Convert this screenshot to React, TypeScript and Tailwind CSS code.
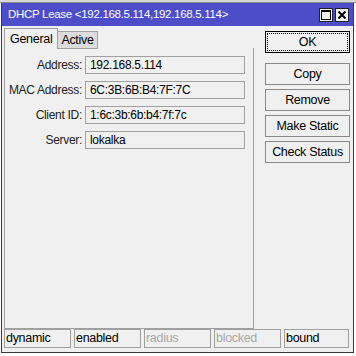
import React from "react";

const fields = [
    {label: "Address:", value: "192.168.5.114"},
    {label: "MAC Address:", value: "6C:3B:6B:B4:7F:7C"},
    {label: "Client ID:", value: "1:6c:3b:6b:b4:7f:7c"},
    {label: "Server:", value: "lokalka"},
];

const buttons = ["Copy", "Remove", "Make Static", "Check Status"];

const status = [
    {text: "dynamic", off: false},
    {text: "enabled", off: false},
    {text: "radius", off: true},
    {text: "blocked", off: true},
    {text: "bound", off: false},
];

export default function App() {
    return (
        <div className="w-[356px] h-[356px] bg-white overflow-hidden text-[12px] tracking-[-0.3px] text-black"
             style={{fontFamily: '"Liberation Sans", Arial, sans-serif'}}>
            {/* window behind */}
            <div className="h-[3px] bg-[#d8d8d8] border-b border-[#888]"/>

            <div className="ml-[1px] w-[353px] h-[350px] border border-[#3a3a3a] border-t-0 bg-[#f0f0f0] flex flex-col">
                {/* title bar */}
                <div className="h-[23px] bg-[#4d4dc9] flex items-center pl-[6px] pr-[4px]">
                    <span className="text-white text-[11.5px] flex-1 whitespace-nowrap">
                        DHCP Lease &lt;192.168.5.114,192.168.5.114&gt;
                    </span>
                    <div className="flex gap-[2px]">
                        <div className="w-[14px] h-[14px] bg-[#f0f0f0] border border-[#222] flex items-center justify-center">
                            <div className="w-[10px] h-[10px] border border-black border-t-2"/>
                        </div>
                        <div className="w-[14px] h-[14px] bg-[#f0f0f0] border border-[#222] flex items-center justify-center">
                            <svg width="8" height="8" viewBox="0 0 8 8">
                                <path d="M0.5 0.5 L7.5 7.5 M7.5 0.5 L0.5 7.5" stroke="black" strokeWidth="2"/>
                            </svg>
                        </div>
                    </div>
                </div>

                <div className="flex flex-1">
                    {/* left: tabs + panel */}
                    <div className="flex flex-col pl-[2px] pt-[2px]">
                        <div className="flex items-end h-[21px] relative z-10">
                            <div className="h-[21px] px-[5px] bg-[#f0f0f0] border border-[#a0a0a0] border-b-0 flex items-center text-[12.5px]">
                                General
                            </div>
                            <div className="h-[18px] px-[3px] bg-[#dcdcdc] border border-[#a0a0a0] border-l-0 flex items-center text-[12.5px]">
                                Active
                            </div>
                        </div>
                        <div className="w-[250px] h-[281px] -mt-[1px] border border-[#a0a0a0] border-t-0 flex flex-col gap-[7px] pt-[8px]">
                            {fields.map((f) => (
                                <div key={f.label} className="flex items-center h-[18px]">
                                    <div className="w-[80px] text-right pr-[3px] text-[#222]">{f.label}</div>
                                    <div className="w-[160px] h-[18px] border border-[#a0a0a0] flex items-center pl-[4px]">
                                        {f.value}
                                    </div>
                                </div>
                            ))}
                        </div>
                    </div>

                    {/* right: buttons */}
                    <div className="flex flex-col pl-[11px] pt-[5px] w-[96px]">
                        <div className="w-[85px] h-[22px] border border-black bg-[#f0f0f0] p-[1px]">
                            <div className="w-full h-full border border-dotted border-black flex items-center justify-center text-[12.5px]">
                                OK
                            </div>
                        </div>
                        <div className="flex flex-col gap-[4px] mt-[10px]">
                            {buttons.map((b) => (
                                <div key={b}
                                     className="w-[85px] h-[22px] border border-[#888] bg-[#f0f0f0] flex items-center justify-center text-[12.5px]">
                                    {b}
                                </div>
                            ))}
                        </div>
                    </div>
                </div>

                {/* status bar */}
                <div className="flex gap-[3px] pl-[2px] pb-[4px]">
                    {status.map((s, i) => (
                        <div key={s.text}
                             className={`${i === 4 ? "w-[65px]" : "w-[67px]"} h-[19px] border border-[#a0a0a0] flex items-center pl-[1px] text-[12.5px] ${s.off ? "text-[#a8a8a8]" : "text-black"}`}>
                            {s.text}
                        </div>
                    ))}
                </div>
            </div>
        </div>
    )
}
